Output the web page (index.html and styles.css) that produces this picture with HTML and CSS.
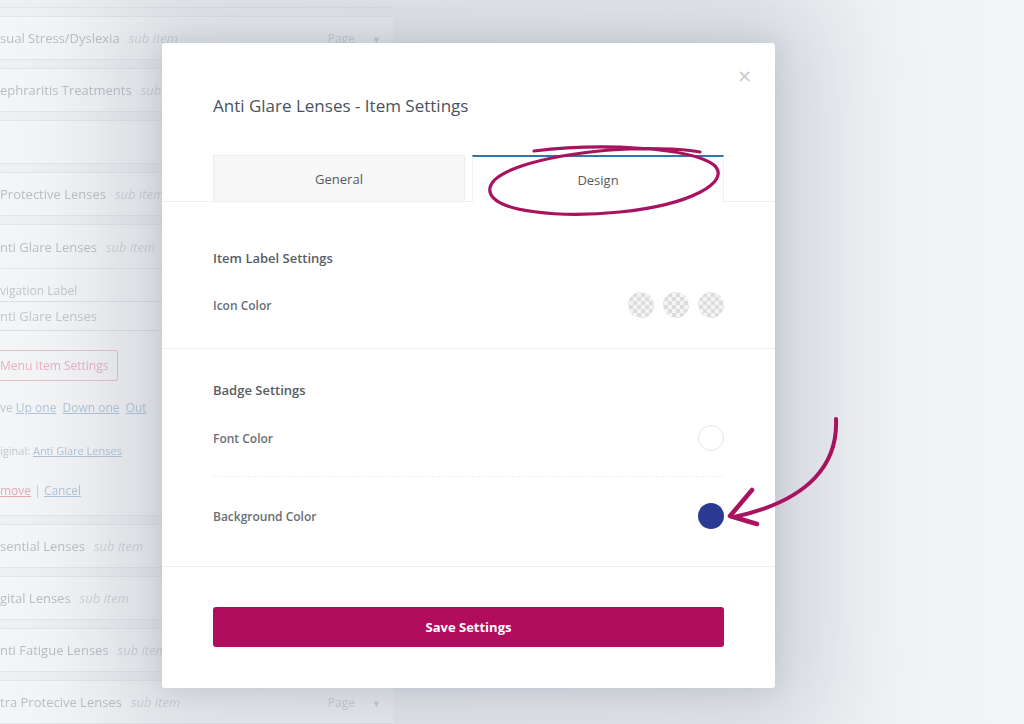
FILE: index.html
```html
<!DOCTYPE html>
<html>
<head>
<meta charset="utf-8">
<link rel="stylesheet" href="styles.css">
</head>
<body>
<div class="page">
  <div class="bg-list">
    <div class="bg-top"></div>
    <div class="bg-row"><span class="bg-name">sual Stress/Dyslexia</span><span class="bg-sub">sub item</span><span class="bg-type">Page <i class="tri">▼</i></span></div>
    <div class="bg-row"><span class="bg-name">ephraritis Treatments</span><span class="bg-sub">sub item</span></div>
    <div class="bg-row"></div>
    <div class="bg-row"><span class="bg-name">Protective Lenses</span><span class="bg-sub">sub item</span></div>
    <div class="bg-row bg-open">
      <div class="bg-head"><span class="bg-name">nti Glare Lenses</span><span class="bg-sub">sub item</span></div>
      <div class="bg-panel">
        <div class="bg-label">vigation Label</div>
        <div class="bg-input">nti Glare Lenses</div>
        <div class="bg-btn">Menu Item Settings</div>
        <div class="bg-move">ve <a>Up one</a> <a>Down one</a> <a>Out</a></div>
        <div class="bg-orig">iginal: <a>Anti Glare Lenses</a></div>
        <div class="bg-remove"><a class="red">move</a> | <a>Cancel</a></div>
      </div>
    </div>
    <div class="bg-row"><span class="bg-name">sential Lenses</span><span class="bg-sub">sub item</span></div>
    <div class="bg-row"><span class="bg-name">gital Lenses</span><span class="bg-sub">sub item</span></div>
    <div class="bg-row"><span class="bg-name">nti Fatigue Lenses</span><span class="bg-sub">sub item</span></div>
    <div class="bg-row"><span class="bg-name">tra Protecive Lenses</span><span class="bg-sub">sub item</span><span class="bg-type">Page <i class="tri">▼</i></span></div>
  </div>

  <div class="modal">
    <span class="close">×</span>
    <h1 class="title">Anti Glare Lenses - Item Settings</h1>
    <div class="tabs">
      <div class="tab">General</div>
      <div class="tab active">Design</div>
    </div>
    <div class="section first">
      <div class="sec-title">Item Label Settings</div>
      <div class="row">
        <span class="label">Icon Color</span>
        <span class="swatches">
          <span class="swatch checker"></span>
          <span class="swatch checker"></span>
          <span class="swatch checker"></span>
        </span>
      </div>
    </div>
    <div class="section second">
      <div class="sec-title">Badge Settings</div>
      <div class="row dashed">
        <span class="label">Font Color</span>
        <span class="swatch white"></span>
      </div>
      <div class="row">
        <span class="label">Background Color</span>
        <span class="swatch blue"></span>
      </div>
    </div>
    <div class="footer">
      <button class="save">Save Settings</button>
    </div>
  </div>

  <svg class="annot" width="1024" height="724" viewBox="0 0 1024 724">
    <path d="M534 151 C 600 143, 690 147, 714 165 C 732 182, 690 205, 620 212 C 560 218, 495 212, 490 192 C 486 172, 540 156, 610 150 C 640 148, 680 148, 700 152" fill="none" stroke="#a8125f" stroke-width="3.2" stroke-linecap="round"/>
    <path d="M836 419 C 838 462, 812 500, 734 517" fill="none" stroke="#a8125f" stroke-width="4" stroke-linecap="round"/>
    <path d="M752 490 L 730 516 L 757 524" fill="none" stroke="#a8125f" stroke-width="4.5" stroke-linecap="round" stroke-linejoin="round"/>
  </svg>
</div>
</body>
</html>
```
FILE: styles.css
```css
* { box-sizing: border-box; }
html, body { margin: 0; padding: 0; }
body {
  width: 1024px;
  height: 724px;
  overflow: hidden;
  font-family: "Open Sans", "Liberation Sans", sans-serif;
  background: #f1f2f4;
}
.page {
  position: relative;
  width: 1024px;
  height: 724px;
  overflow: hidden;
  background: linear-gradient(90deg, #eef0f2 0%, #eceef1 40%, #eef0f3 75%, #f4f5f7 100%);
}

/* background list */
.bg-list {
  width: 393px;
  padding-top: 4px;
  display: flex;
  flex-direction: column;
  gap: 8px;
  filter: blur(0.5px);
}
.bg-top {
  height: 4px;
  border-bottom: 1px solid #e3e5e8;
}
.bg-row {
  height: 44px;
  display: flex;
  align-items: center;
  border-top: 1px solid #e4e6e9;
  border-bottom: 1px solid #e4e6e9;
  background: rgba(255,255,255,0.35);
  font-size: 13px;
  color: #b9bdc3;
}
.bg-open {
  height: auto;
  flex-direction: column;
  align-items: stretch;
}
.bg-head {
  height: 44px;
  display: flex;
  align-items: center;
  border-bottom: 1px solid #e4e6e9;
}
.bg-name { color: #b9bdc3; }
.bg-sub {
  font-style: italic;
  color: #d0d3d7;
  margin-left: 9px;
}
.bg-type {
  margin-left: auto;
  margin-right: 12px;
  color: #cbced2;
  font-size: 12px;
}
.tri {
  font-style: normal;
  font-size: 9px;
  margin-left: 14px;
}
.bg-panel {
  display: flex;
  flex-direction: column;
  padding: 14px 0 16px;
  font-size: 12px;
  color: #c3c6cb;
}
.bg-label { line-height: 16px; }
.bg-input {
  margin-top: 2px;
  height: 30px;
  display: flex;
  align-items: center;
  border-top: 1px solid #dde0e4;
  border-bottom: 1px solid #dde0e4;
  font-size: 13px;
  color: #c3c6cb;
  margin-right: 230px;
}
.bg-btn {
  margin-top: 19px;
  width: 118px;
  height: 31px;
  display: flex;
  align-items: center;
  border: 1px solid #ebbdca;
  border-left: none;
  border-radius: 0 3px 3px 0;
  color: #e6b0c1;
  font-size: 12px;
}
.bg-move { margin-top: 19px; line-height: 16px; }
.bg-orig { margin-top: 27px; font-size: 11px; line-height: 16px; }
.bg-remove { margin-top: 24px; line-height: 16px; }
.bg-panel a {
  color: #adc4db;
  text-decoration: underline;
  margin-right: 3px;
}
.bg-panel a.red { color: #e5abb5; margin-right: 0; }

/* modal */
.modal {
  position: absolute;
  left: 162px;
  top: 43px;
  width: 613px;
  height: 645px;
  background: #ffffff;
  border-radius: 3px;
  box-shadow: 0 0 100px 45px rgba(140, 150, 165, 0.32), 0 0 24px rgba(110,120,135,0.22);
  display: flex;
  flex-direction: column;
}
.close {
  position: absolute;
  right: 23px;
  top: 23px;
  font-size: 18px;
  line-height: 20px;
  color: #c6c8cb;
  font-family: "DejaVu Sans", sans-serif;
}
.title {
  margin: 52px 51px 0;
  font-size: 17px;
  line-height: 22px;
  font-weight: 500;
  color: #48535e;
}
.tabs {
  margin-top: 38px;
  padding: 0 51px;
  display: flex;
  gap: 7px;
  border-bottom: 1px solid #eeeff1;
}
.tab {
  flex: 1;
  height: 46px;
  display: flex;
  align-items: center;
  justify-content: center;
  font-size: 13px;
  color: #555b61;
  background: #f7f7f7;
  border: 1px solid #ececec;
  border-bottom: none;
}
.tab.active {
  background: #ffffff;
  border-top: 2px solid #2e74ad;
  border-left-color: #f0f0f0;
  border-right-color: #f0f0f0;
  margin-bottom: -1px;
  height: 47px;
}
.section {
  padding: 0 51px;
  border-bottom: 1px solid #eeeff1;
}
.section.first { padding-top: 47px; padding-bottom: 30px; }
.section.second { padding-top: 32px; padding-bottom: 37px; }
.sec-title {
  font-size: 13px;
  line-height: 18px;
  font-weight: 600;
  color: #575d64;
}
.row {
  display: flex;
  align-items: center;
  justify-content: space-between;
  height: 26px;
  margin-top: 25px;
}
.section.second .row.dashed {
  margin-top: 26px;
  height: auto;
  padding-bottom: 25px;
  border-bottom: 1px dashed #eef0f2;
}
.section.second .row:last-child { margin-top: 26px; }
.label {
  font-size: 12px;
  font-weight: 600;
  color: #696f75;
}
.swatches { display: flex; gap: 9px; }
.swatch {
  width: 26px;
  height: 26px;
  border-radius: 50%;
  display: block;
}
.checker {
  background: repeating-conic-gradient(#dcdcdc 0 25%, #f4f4f4 0 50%) 1px 1px / 8px 8px;
}
.white { border: 1px solid #e4e5e7; background: #fff; }
.blue { background: #2c3993; }
.footer {
  padding: 40px 51px 0;
}
.save {
  width: 100%;
  height: 40px;
  border: none;
  border-radius: 3px;
  background: #b20c5f;
  color: #ffffff;
  font-family: "Open Sans", "Liberation Sans", sans-serif;
  font-size: 13px;
  font-weight: 700;
}
.annot {
  position: absolute;
  left: 0;
  top: 0;
  pointer-events: none;
}
```
